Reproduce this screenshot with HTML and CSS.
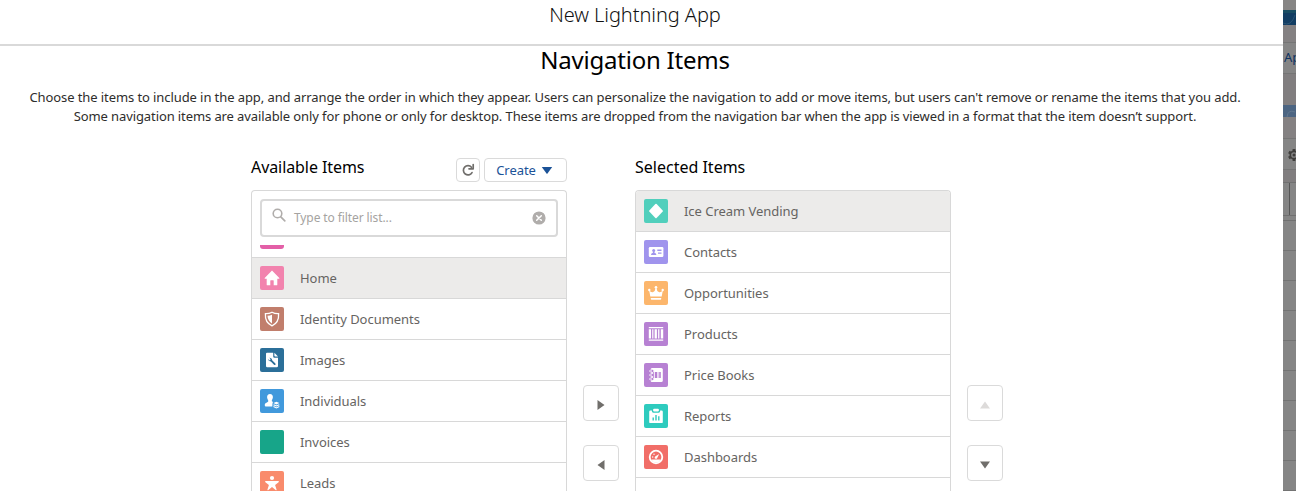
FILE: index.html
```html
<!DOCTYPE html>
<html lang="en">
<head>
<meta charset="utf-8">
<title>New Lightning App</title>
<link rel="stylesheet" href="styles.css">
</head>
<body>
<div class="screen">
  <main class="modal">
    <header class="modal-header"><h1>New Lightning App</h1></header>
    <section class="intro">
      <h2>Navigation Items</h2>
      <p><span class="line-one">Choose the items to include in the app, and arrange the order in which they appear. Users can personalize the navigation to add or move items, but users can't remove or rename the items that you add.</span><br><span class="line-two">Some navigation items are available only for phone or only for desktop. These items are dropped from the navigation bar when the app is viewed in a format that the item doesn’t support.</span></p>
    </section>
    <section class="picker">
      <div class="column">
        <div class="column-head">
          <h3 class="available">Available Items</h3>
          <button class="btn refresh" aria-label="Refresh"><svg width="14" height="14" viewBox="0 0 14 14"><path d="M11 9.600A4.600 4.600 0 1 1 10.500 4.300" fill="none" stroke="#706e6b" stroke-width="1.700" stroke-linecap="round"/><path d="M12.200 1.600v4.200H8" fill="none" stroke="#706e6b" stroke-width="1.700" stroke-linecap="round" stroke-linejoin="round"/></svg></button>
          <button class="btn create"><span>Create</span><svg width="12" height="8" viewBox="0 0 12 8"><path d="M.8 1h10.400L6.500 7.500q-.5.5-1 0z" fill="#1b5297"/></svg></button>
        </div>
        <div class="list">
          <div class="search">
            <svg width="14" height="14" viewBox="0 0 14 14"><circle cx="5.500" cy="5.500" r="4.300" fill="none" stroke="#b0adab" stroke-width="1.600"/><path d="M8.800 8.800l4 4" stroke="#b0adab" stroke-width="1.700" stroke-linecap="round"/></svg>
            <span class="placeholder">Type to filter list...</span>
            <svg class="clear" width="14" height="14" viewBox="0 0 14 14"><circle cx="7" cy="7" r="6.600" fill="#b0adab"/><path d="M4.700 4.700l4.600 4.600M9.300 4.700L4.700 9.300" stroke="#fff" stroke-width="1.500" stroke-linecap="round"/></svg>
          </div>
          <div class="clipped"><i></i></div>
          <div class="row selected"><svg class="icon home" viewBox="0 0 24 24"><path d="M12 4.600L4.700 12q-.5.800.4.800h1.600v5.900q0 .6.600.6h3v-4.600q0-.5.500-.5h2.400q.5 0 .5.500v4.600h3q.6 0 .6-.6v-5.900h1.600q.9 0 .4-.8z"/></svg><span>Home</span></div>
          <div class="row"><svg class="icon identity" viewBox="0 0 24 24"><path class="outline" d="M12 5.300q3 1.600 6.600 1.400Q19.200 15.500 12 18.800Q4.800 15.500 5.400 6.700Q9 6.900 12 5.300z"/><path d="M12 7.700Q9.900 8.700 7.500 8.700Q7.700 13.700 12 16.400z"/></svg><span>Identity Documents</span></div>
          <div class="row"><svg class="icon images" viewBox="0 0 24 24"><path d="M7 4.800h6.200v3.700q0 1.300 1.300 1.300H18v8.100q0 1.300-1.300 1.300H7.300Q6 19.200 6 17.900V5.800q0-1 1-1z"/><path d="M14.400 4.800v2.900q0 .8.800.8H18z"/><path d="M11 12.400l3.700 3.700" fill="none" stroke="#2b6f99" stroke-width="1.900" stroke-linecap="round"/><path d="M8.100 10.900l1.500 1.500 1.200-1.200-1.500-1.500a2.500 2.500 0 0 1 2.600 3.200 2.500 2.500 0 0 1-3.800-2z" fill="#2b6f99"/></svg><span>Images</span></div>
          <div class="row"><svg class="icon individuals" viewBox="0 0 24 24"><path d="M10 5c2 0 3 1.400 2.900 3.200-.1 1.700-1 2.500-1.100 3.600 0 .7.600 1 1.300 1.300q-1 .9-.5 1.800-.7.900-.1 1.800-.3.500-.2.900H5.800q-1 0-1-1v-.8c0-2.200 3.500-2.100 3.500-3.700 0-1.100-1.100-1.900-1.200-3.600C7 6.400 8 5 10 5z"/><path d="M16.400 12.700l3 1.400-3 1.400-3-1.400z"/><path class="layers" d="M13.500 15.700l2.900 1.300 2.900-1.300M13.500 17.600l2.900 1.300 2.900-1.300"/></svg><span>Individuals</span></div>
          <div class="row"><svg class="icon invoices" viewBox="0 0 24 24"></svg><span>Invoices</span></div>
          <div class="row"><svg class="icon leads" viewBox="0 0 24 24"><circle cx="12" cy="7" r="2.100"/><path d="M5.600 10h12.800q1 .6.200 1.300l-3.500 2.700 1.500 4.700q-.2.900-1 .4L12 16l-3.600 3.100q-.8.500-1-.4L8.900 14l-3.500-2.700q-.8-.7.200-1.300z"/></svg><span>Leads</span></div>
        </div>
      </div>
      <div class="moves">
        <button class="btn move" aria-label="Add"><svg width="10" height="10" viewBox="0 0 10 10"><path d="M1.500 0v10l7-5z"/></svg></button>
        <button class="btn move" aria-label="Remove"><svg width="10" height="10" viewBox="0 0 10 10"><path d="M8.500 0v10l-7-5z"/></svg></button>
      </div>
      <div class="column">
        <div class="column-head"><h3 class="chosen">Selected Items</h3></div>
        <div class="list">
          <div class="row selected"><svg class="icon custom" viewBox="0 0 24 24"><path d="M11.400 5.100q.6-.6 1.200 0l6.100 6.300q.5.600 0 1.200l-6.100 6.300q-.6.600-1.200 0l-6.100-6.300q-.5-.6 0-1.200z"/></svg><span>Ice Cream Vending</span></div>
          <div class="row"><svg class="icon contacts" viewBox="0 0 24 24"><rect x="4.800" y="7" width="14.600" height="10" rx="1.200"/><g fill="#a094ed"><circle cx="9.700" cy="10.400" r="1.500"/><path d="M7 14.900q0-1.600 1.900-2.100v-1h1.600v1q1.900.5 1.900 2.100zM13.300 9.600h4.200v1.300h-4.200zM14 12.500h3.500v1.300H14z"/></g></svg><span>Contacts</span></div>
          <div class="row"><svg class="icon opportunities" viewBox="0 0 24 24"><path d="M6.300 15.500L5.100 9q1.800 2.900 4.100 2.100Q11.300 10 11.500 7h1q.2 3 2.300 4.100 2.300.8 4.100-2.100l-1.200 6.500zM6.800 17h10.400v1.100q0 .7-.8.700H7.600q-.8 0-.8-.7z"/><circle cx="12" cy="6.300" r="1.300"/><circle cx="5.300" cy="9" r="1.200"/><circle cx="18.700" cy="9" r="1.200"/></svg><span>Opportunities</span></div>
          <div class="row"><svg class="icon products" viewBox="0 0 24 24"><path d="M4.800 5h14.400v1.200H4.800zM4.800 17.500h14.400v1.200H4.800zM4.800 7.300H7v9.100H4.800zM8.200 7.300h1.200v9.100H8.200zM10.600 7.300h2.300v9.100h-2.300zM14.100 7.300h1.300v9.100h-1.300zM16.800 7.300h2.400v9.100h-2.400z"/></svg><span>Products</span></div>
          <div class="row"><svg class="icon pricebooks" viewBox="0 0 24 24"><path d="M8 5h9.300q1.500 0 1.500 1.500v11q0 1.500-1.500 1.500H8q-1.400 0-1.400-1.500v-11Q6.600 5 8 5z"/><path d="M5.500 8h2.700M5.500 12h2.700M5.500 16h2.700" stroke="#b781d3" stroke-width="2.600" stroke-linecap="round"/><path d="M5.500 8h2M5.500 12h2M5.500 16h2" stroke="#fff" stroke-width="1.200" stroke-linecap="round"/><path d="M9.200 9h1v6h-1zM11 9h2v6h-2zM13.700 9h.7v6h-.7zM15.200 9h1.600v6h-1.600z" fill="#b781d3"/></svg><span>Price Books</span></div>
          <div class="row"><svg class="icon reports" viewBox="0 0 24 24"><path d="M6.400 6.500h1.500v.8q0 1.400 1.400 1.400h5.400q1.400 0 1.400-1.400v-.8h1.500q1.200 0 1.200 1.200v10.200q0 1.200-1.200 1.200H6.400q-1.200 0-1.200-1.200V7.700q0-1.200 1.200-1.200z"/><path d="M10.100 4.700h3.800q1 0 1 1v.9q0 .8-.8.800H9.900q-.8 0-.8-.8v-.9q0-1 1-1z"/><path d="M9.200 13.600v2.800M12 11v5.400M14.800 12.300v4.100" stroke="#2ecbbe" stroke-width="1.400"/></svg><span>Reports</span></div>
          <div class="row"><svg class="icon dashboards" viewBox="0 0 24 24"><circle cx="12" cy="12" r="6.300" fill="none" stroke="#fff" stroke-width="1.800"/><path d="M7.500 14.500h9q-1.500 3.300-4.500 3.300t-4.500-3.300z"/><path d="M10.700 13.200q-.3-1.200.8-1.900l3.700-2.300-2 3.900q-.6 1.600-2.500.3z"/><circle cx="8.700" cy="12" r=".7"/><circle cx="10" cy="9.300" r=".7"/></svg><span>Dashboards</span></div>
        </div>
      </div>
      <div class="moves">
        <button class="btn move" aria-label="Move up"><svg width="10" height="10" viewBox="0 0 10 10"><path class="disabled" d="M0 8.500h10L5 1.500z"/></svg></button>
        <button class="btn move" aria-label="Move down"><svg width="10" height="10" viewBox="0 0 10 10"><path d="M0 1.500h10l-5 7z"/></svg></button>
      </div>
    </section>
  </main>
  <aside class="backdrop">
    <div class="bd-top"></div>
    <div class="bd-banner"><svg width="13" height="12"><path d="M0 10Q8 14 12 2" fill="none" stroke="#295374"/></svg></div>
    <div class="bd-gap"></div>
    <div class="bd-link">Ap</div>
    <div class="bd-space"></div>
    <div class="bd-wave"><svg width="13" height="12"><path d="M4 12Q5 4 12 7" fill="none" stroke="#61788f"/></svg></div>
    <div class="bd-sub"></div>
    <div class="bd-gear"><svg width="14" height="14" viewBox="0 0 14 14"><path d="M7 1v12M1.800 4l10.400 6M12.200 4L1.800 10" stroke="#403f3d" stroke-width="2.800"/><circle cx="7" cy="7" r="3.700" fill="#858585" stroke="#403f3d" stroke-width="1.700"/><circle cx="7" cy="7" r="1.500" fill="#403f3d"/></svg></div>
    <div class="bd-sub2"></div>
    <div class="bd-head"><i></i></div>
    <div class="bd-pad"></div>
    <div class="bd-row"></div><div class="bd-row"></div><div class="bd-row"></div><div class="bd-row"></div><div class="bd-row"></div><div class="bd-row"></div><div class="bd-row"></div><div class="bd-row"></div><div class="bd-row"></div>
  </aside>
</div>
</body>
</html>
```
FILE: styles.css
```css
* { box-sizing: border-box; }
body { margin: 0; font-family: "Noto Sans", sans-serif; font-size: 13px; overflow: hidden; background: #fff; }
h1, h2, h3, p { margin: 0; font-weight: 400; white-space: nowrap; }
svg { display: block; flex: none; }
.screen { display: flex; width: 1296px; height: 491px; overflow: hidden; }
.modal { width: 1283px; flex: none; }
.modal-header { height: 46px; border-bottom: 2px solid #d9d9d9; text-align: center; padding-right: 13px; }
h1 { font-size: 20px; line-height: 30px; font-weight: 300; letter-spacing: -.06px; color: #111; }
.intro { height: 112px; text-align: center; padding-right: 13px; color: #000; }
h2 { font-size: 24px; line-height: 28px; letter-spacing: -.22px; color: #000; }
.intro p { margin-top: 14px; line-height: 19px; color: #2e2d2c; }
.line-one { letter-spacing: -.087px; }
.line-two { letter-spacing: -.102px; }
.picker { display: flex; gap: 16px; height: 333px; padding-left: 251px; }
.column { width: 316px; flex: none; }
.column-head { display: flex; height: 32px; align-items: flex-start; }
h3 { flex: 1; margin-top: -2px; font-size: 16px; line-height: 23px; color: #000; }
.available { letter-spacing: -.08px; }
.btn { display: flex; align-items: center; justify-content: center; padding: 0; background: #fff; border: 1px solid #dadada; border-radius: 4px; font: inherit; }
.refresh { width: 24px; height: 24px; margin-right: 4px; }
.create { width: 83px; height: 24px; gap: 5px; color: #1b5297; padding: 0 2px 1px 0; }
.create span { letter-spacing: -.05px; }
.list { height: 310px; border: 1px solid #d8d8d8; border-bottom: 0; border-radius: 4px 4px 0 0; overflow: hidden; }
.search { display: flex; margin: 8px 8px 0; height: 38px; border: 2px solid #d9d9d9; border-radius: 4px; align-items: center; padding: 0 10px 0 10px; color: #a5a3a1; }
.search svg:first-child { margin-top: -6px; }
.placeholder { flex: 1; margin-left: 8px; margin-top: -1px; font-size: 12px; letter-spacing: -.1px; }
.clipped { height: 21px; padding: 8px 8px 0; border-bottom: 1px solid #d8d8d8; }
.clipped i { display: block; width: 24px; height: 4px; background: #e35fa7; border-radius: 0 0 3px 3px; }
.row { display: flex; align-items: center; gap: 16px; height: 41px; padding: 0 8px; border-bottom: 1px solid #d8d8d8; color: #666462; letter-spacing: -.04px; }
.selected { background: #ecebea; }
.icon { width: 24px; height: 24px; border-radius: 2px; fill: #fff; }
.home { background: #f283ae; }
.identity { background: #c17e6c; }
.outline { fill: none; stroke: #fff; stroke-width: 1.3; }
.images { background: #2b6f99; }
.individuals { background: #4199dc; }
.layers { fill: none; stroke: #fff; stroke-width: 1.1; }
.invoices { background: #17a589; }
.leads { background: #f98b6c; }
.custom { background: #51cfbc; }
.contacts { background: #a094ed; }
.opportunities { background: #fcb66c; }
.products, .pricebooks { background: #b781d3; }
.reports { background: #2ecbbe; }
.dashboards { background: #f16e68; }
.moves { display: flex; flex-direction: column; gap: 24px; width: 36px; padding-top: 227px; flex: none; }
.move { width: 36px; height: 36px; flex: none; }
.move svg { margin-top: 3px; }
.move path { fill: #706e6b; }
.move .disabled { fill: #dddbda; }
.backdrop { width: 13px; flex: none; overflow: hidden; background: #858585; }
.bd-top { height: 10px; background: #868584; }
.bd-banner { height: 15px; background: #123d63; border-top: 3px solid #194d63; overflow: hidden; }
.bd-gap { height: 18px; background: #848182; border-bottom: 1px solid #757575; }
.bd-link { height: 31px; border-bottom: 1px solid #757575; line-height: 29px; padding-left: 1px; color: #0e3261; }
.bd-space { height: 31px; background: #817e7f; }
.bd-wave { height: 12px; background: #4c6582; overflow: hidden; }
.bd-sub { height: 22px; background: #848182; border-bottom: 1px solid #757575; }
.bd-gear { height: 31px; padding: 9px 0 0 4px; border-bottom: 1px solid #757575; }
.bd-sub2 { height: 13px; background: #817e7f; border-bottom: 1px solid #707070; }
.bd-head { height: 33px; border-bottom: 1px solid #707070; padding-left: 6px; }
.bd-head i { display: block; width: 1px; height: 32px; background: #555; }
.bd-pad { height: 5px; border-bottom: 1px solid #707070; }
.bd-row { height: 30px; border-bottom: 1px solid #737373; }
```
